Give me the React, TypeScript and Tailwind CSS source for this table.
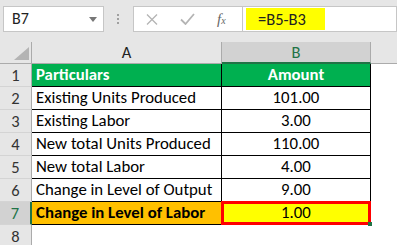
import React from "react";

const rows = [
  { label: "Particulars", value: "Amount", kind: "head" },
  { label: "Existing Units Produced", value: "101.00" },
  { label: "Existing Labor", value: "3.00" },
  { label: "New total Units Produced", value: "110.00" },
  { label: "New total Labor", value: "4.00" },
  { label: "Change in Level of Output", value: "9.00" },
  { label: "Change in Level of Labor", value: "1.00", kind: "result" },
];

const font = "font-['Calibri','Lato','Liberation_Sans',sans-serif]";

const Toolbar = () => (
  <div className="flex h-[42px] items-start bg-[#e6e6e6] pt-[6px]">
    <div className="ml-[3px] flex h-[26px] w-[101px] items-center justify-between border border-[#c6c6c6] bg-white pl-[8px] pr-[6px]">
      <span className="text-[16px] text-[#222]">B7</span>
      <svg width="8" height="5" viewBox="0 0 8 5">
        <path d="M0 0h8L4 5z" fill="#777" />
      </svg>
    </div>
    <div className="ml-[13px] mt-[8px] flex flex-col gap-[2px]">
      <span className="h-[2px] w-[2px] bg-[#a0a0a0]" />
      <span className="h-[2px] w-[2px] bg-[#a0a0a0]" />
      <span className="h-[2px] w-[2px] bg-[#a0a0a0]" />
    </div>
    <div className="ml-[14px] flex h-[26px] w-[110px] items-center border border-[#c6c6c6] bg-white">
      <svg className="ml-[12px]" width="12" height="11" viewBox="0 0 12 11">
        <path d="M1 0.5l10 10M11 0.5l-10 10" stroke="#b4b4b4" strokeWidth="1.3" />
      </svg>
      <svg className="ml-[22px]" width="15" height="12" viewBox="0 0 15 12">
        <path d="M1 6.5l4.5 4.5L14 1" stroke="#b4b4b4" strokeWidth="1.8" fill="none" />
      </svg>
      <span className="ml-[22px] font-['Liberation_Serif',serif] text-[15px] italic text-[#666]">
        f<span className="text-[10px]">x</span>
      </span>
    </div>
    <div className="flex h-[26px] flex-1 items-stretch border border-l-0 border-[#c6c6c6] bg-white py-[1px] pl-[3px]">
      <div className="flex w-[79px] items-center bg-[#ffff00] pl-[12px] text-[16.5px] text-[#222]">
        =B5-B3
      </div>
    </div>
  </div>
);

const ColumnHeaders = () => (
  <div className="flex h-[22px] bg-[#e6e6e6]">
    <div className="relative w-[32px] border-b border-r border-[#ababab]">
      <svg className="absolute bottom-[3px] right-[2px]" width="15" height="13" viewBox="0 0 15 13">
        <path d="M15 0v13H0z" fill="#b4b4b4" />
      </svg>
    </div>
    <div className="flex w-[190px] items-center justify-center border-b border-r border-[#ababab] text-[16.5px] text-[#222]">
      A
    </div>
    <div className="flex w-[149px] items-center justify-center border-b-2 border-r border-b-[#217346] border-r-[#ababab] bg-[#d2d2d2] text-[16.5px] text-[#217346]">
      B
    </div>
    <div className="flex-1 border-b border-[#ababab]" />
  </div>
);

export default function App() {
  return (
    <div className={`h-[245px] w-[397px] overflow-hidden bg-white ${font}`}>
      <Toolbar />
      <ColumnHeaders />
      {rows.map((r, i) => {
        const head = r.kind === "head";
        const result = r.kind === "result";
        return (
          <div key={i} className="flex h-[23px] text-[16.8px]">
            <div
              className={
                "flex w-[32px] items-center justify-center border-b border-[#d4d4d4] text-[16.5px] " +
                (result
                  ? "border-r-2 border-r-[#217346] bg-[#d2d2d2] text-[#217346]"
                  : "border-r border-r-[#ababab] bg-[#e6e6e6] text-[#333]")
              }
            >
              {i + 1}
            </div>
            <div
              className={
                "flex w-[190px] items-center border-b border-r border-black pl-[4px] " +
                (head
                  ? "bg-[#00b050] font-bold text-white"
                  : result
                  ? "bg-[#ffc000] font-bold text-black"
                  : "bg-white text-black")
              }
            >
              {r.label}
            </div>
            <div
              className={
                "relative flex w-[149px] items-center justify-center border-b border-r border-black " +
                (head
                  ? "bg-[#00b050] font-bold text-white"
                  : result
                  ? "bg-[#ffff00] text-black"
                  : "bg-white text-black")
              }
            >
              {r.value}
              {result && (
                <>
                  <div className="absolute -left-[1px] -top-[1px] bottom-[-1px] right-[-1px] border-[3px] border-[#ff0000]" />
                  <div className="absolute -bottom-[2px] -right-[2px] h-[4px] w-[4px] bg-[#217346]" />
                </>
              )}
            </div>
            <div className="flex-1" />
          </div>
        );
      })}
      <div className="flex h-[23px] text-[16.5px]">
        <div className="flex w-[32px] items-center justify-center border-b border-r border-[#d4d4d4] border-r-[#ababab] bg-[#e6e6e6] text-[#333]">
          8
        </div>
        <div className="flex-1" />
      </div>
    </div>
  );
}
